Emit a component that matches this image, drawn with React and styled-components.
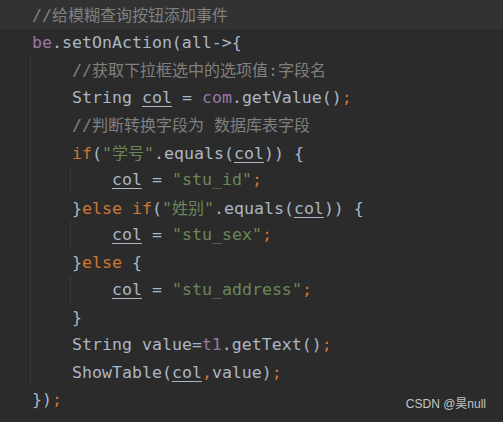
import styled, { createGlobalStyle, css } from 'styled-components';

const GlobalStyle = createGlobalStyle`
  html, body {
    margin: 0;
    padding: 0;
    background: #2b2b2b;
  }
`;

const Editor = styled.div`
  position: relative;
  width: 503px;
  height: 422px;
  overflow: hidden;
  box-sizing: border-box;
  padding-left: 30px;
  background: #2b2b2b;
  color: #a9b7c6;
  font-family: "DejaVu Sans Mono", "Noto Sans CJK SC", monospace;
  font-size: 16.6px;
`;

const Line = styled.div`
  height: 27.5px;
  line-height: 27.5px;
  padding-left: 2px;
  white-space: pre;

  ${props =>
    props.$current &&
    css`
      margin-left: -30px;
      padding-left: 32px;
      padding-top: 1px;
      background: #323232;
    `}
`;

// indent guide: a thin rule at the left of each nested block
const Block = styled.div`
  border-left: 1px solid #3a3a3a;
  padding-left: 39px;
`;

const tokenColors = {
  comment: '#808080',
  keyword: '#cc7832',
  string: '#6a8759',
  field: '#9876aa',
};

const Token = styled.span`
  color: ${props => tokenColors[props.$kind]};
`;

const Var = styled.span`
  text-decoration: underline;
  text-underline-offset: 3px;
  text-decoration-thickness: 1px;
`;

const Cjk = styled.span`
  font-family: "Noto Sans CJK SC", sans-serif;
  font-size: 16px;
`;

const Watermark = styled.div`
  position: absolute;
  right: 17px;
  top: 396px;
  line-height: 16px;
  font-family: "Liberation Sans", Arial, "Noto Sans CJK SC", sans-serif;
  font-size: 12px;
  color: #c4c4c4;
`;

const Semi = () => <Token $kind="keyword">;</Token>;

const Assign = ({ value }) => (
  <Line>
    <Var>col</Var> = <Token $kind="string">"{value}"</Token>
    <Semi />
  </Line>
);

const App = () => (
  <>
    <GlobalStyle />
    <Editor>
      <Line $current>
        <Token $kind="comment">
          //<Cjk>给模糊查询按钮添加事件</Cjk>
        </Token>
      </Line>
      <Line>
        <Token $kind="field">be</Token>.setOnAction(all-&gt;{'{'}
      </Line>
      <Block>
        <Line>
          <Token $kind="comment">
            //<Cjk>获取下拉框选中的选项值</Cjk>:<Cjk>字段名</Cjk>
          </Token>
        </Line>
        <Line>
          String <Var>col</Var> = <Token $kind="field">com</Token>.getValue()
          <Semi />
        </Line>
        <Line>
          <Token $kind="comment">
            //<Cjk>判断转换字段为</Cjk> <Cjk>数据库表字段</Cjk>
          </Token>
        </Line>
        <Line>
          <Token $kind="keyword">if</Token>(
          <Token $kind="string">
            "<Cjk>学号</Cjk>"
          </Token>
          .equals(<Var>col</Var>)) {'{'}
        </Line>
        <Block>
          <Assign value="stu_id" />
        </Block>
        <Line>
          {'}'}
          <Token $kind="keyword">else if</Token>(
          <Token $kind="string">
            "<Cjk>姓别</Cjk>"
          </Token>
          .equals(<Var>col</Var>)) {'{'}
        </Line>
        <Block>
          <Assign value="stu_sex" />
        </Block>
        <Line>
          {'}'}
          <Token $kind="keyword">else</Token> {'{'}
        </Line>
        <Block>
          <Assign value="stu_address" />
        </Block>
        <Line>{'}'}</Line>
        <Line>
          String value=<Token $kind="field">t1</Token>.getText()
          <Semi />
        </Line>
        <Line>
          ShowTable(<Var>col</Var>
          <Token $kind="keyword">,</Token>value)
          <Semi />
        </Line>
      </Block>
      <Line>
        {'})'}
        <Semi />
      </Line>
      <Watermark>CSDN @昊null</Watermark>
    </Editor>
  </>
);

export default App;
